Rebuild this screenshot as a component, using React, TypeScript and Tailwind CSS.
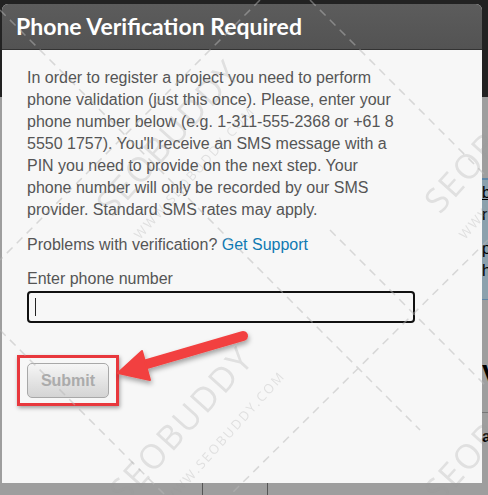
import React from "react";

export default function App() {
  return (
    <div className="relative w-[488px] h-[495px] overflow-hidden bg-[#9e9e9e]" style={{ fontFamily: '"Liberation Sans", Arial, sans-serif' }}>
      {/* page behind the modal */}
      <div className="flex flex-col w-full h-full">
        <div className="h-[97px] bg-[#222222] shrink-0" />
        <div className="flex-1 flex justify-end">
          <div className="w-[6px] flex flex-col">
            <div className="h-[81px]" />
            <div className="h-[122px] bg-[#8ca1ad] border-t-2 border-b border-[#5f86a6] text-[16px] leading-[22px] text-black pt-[2px]">
              <div className="underline">b</div>
              <div>r</div>
              <div className="mt-[12px]">p</div>
              <div>h</div>
            </div>
            <div className="h-[60px]" />
            <div className="text-[28px] font-bold leading-[30px] text-black">V</div>
            <div className="mt-[22px] border-t border-[#777]" />
            <div className="mt-[12px] text-[16px] font-bold text-black">a</div>
          </div>
        </div>
      </div>
      {/* bottom table lines */}
      <div className="absolute left-[202px] top-[483px] w-px h-[12px] bg-[#555]" />
      <div className="absolute left-[267px] top-[483px] w-px h-[12px] bg-[#555]" />

      {/* modal */}
      <div className="absolute left-[2px] top-[4px] w-[480px] h-[479px] flex flex-col bg-[#f7f7f7] rounded-t-[6px] overflow-hidden">
        <div className="h-[46px] shrink-0 bg-gradient-to-b from-[#5c5c5c] to-[#535353] border-b border-[#333] flex items-center pl-[14px]">
          <h1 className="text-white text-[23px] font-bold" style={{ fontFamily: 'Lato, "Open Sans", sans-serif' }}>
            Phone Verification Required
          </h1>
        </div>
        <div className="pl-[25px] pt-[17px] text-[16px] leading-[22px] text-[#555]">
          <p className="w-[372px]">
            In order to register a project you need to perform phone validation (just this once). Please, enter your phone number below (e.g. 1-311-555-2368 or +61 8 5550 1757). You'll receive an SMS message with a PIN you need to provide on the next step. Your phone number will only be recorded by our SMS provider. Standard SMS rates may apply.
          </p>
          <p className="mt-[13px]">
            Problems with verification? <span className="text-[#0f7ab3]">Get Support</span>
          </p>
          <div className="mt-[12px]">Enter phone number</div>
          <div className="mt-[1px] h-[32px] w-[388px] border-2 border-[#111] rounded-[4px] bg-[#f7f7f7] flex items-center pl-[6px]">
            <div className="w-px h-[18px] bg-[#222]" />
          </div>
          <button className="mt-[40px] w-[82px] h-[35px] rounded-[5px] border border-[#a8a8a8] bg-gradient-to-b from-[#f6f6f6] to-[#d4d4d4] text-[#ababab] font-bold text-[16px]">
            Submit
          </button>
        </div>
      </div>

      {/* annotation: red box */}
      <div className="absolute left-[17px] top-[355px] w-[102px] h-[51px] border-[3px] border-[#e8383d] shadow-[1px_2px_4px_rgba(0,0,0,0.35)]" />

      {/* watermark + arrow overlay */}
      <svg className="absolute inset-0 pointer-events-none" width="488" height="495" viewBox="0 0 488 495">
        <defs>
          <filter id="sh" x="-20%" y="-40%" width="140%" height="180%">
            <feDropShadow dx="1" dy="3" stdDeviation="2.5" floodColor="#000" floodOpacity="0.35" />
          </filter>
        </defs>
        <g stroke="#b8b8b8" strokeWidth="1.5" strokeDasharray="8 6" opacity="0.5" fill="none">
          <line x1="0" y1="10" x2="420" y2="430" />
          <line x1="260" y1="0" x2="0" y2="260" />
          <line x1="310" y1="0" x2="488" y2="178" />
          <line x1="488" y1="240" x2="230" y2="495" />
          <line x1="0" y1="330" x2="165" y2="495" />
          <line x1="330" y1="230" x2="490" y2="390" />
        </g>
        <g fill="#9a9a9a" opacity="0.25" style={{ fontFamily: '"Open Sans", sans-serif' }}>
          <text x="0" y="0" fontSize="34" transform="translate(112 218) rotate(-48)" letterSpacing="2">SEOBUDDY</text>
          <text x="0" y="0" fontSize="13" transform="translate(140 240) rotate(-48)" letterSpacing="2">WWW.SEOBUDDY.COM</text>
          <text x="0" y="0" fontSize="34" transform="translate(125 505) rotate(-48)" letterSpacing="2">SEOBUDDY</text>
          <text x="0" y="0" fontSize="13" transform="translate(170 505) rotate(-48)" letterSpacing="2">WWW.SEOBUDDY.COM</text>
          <text x="0" y="0" fontSize="34" transform="translate(440 215) rotate(-48)" letterSpacing="2">SEOBUDDY</text>
          <text x="0" y="0" fontSize="13" transform="translate(465 240) rotate(-48)" letterSpacing="2">WWW.SEOBUDDY.COM</text>
          <text x="0" y="0" fontSize="34" transform="translate(440 505) rotate(-48)" letterSpacing="2">SEOBUDDY</text>
        </g>
        <g filter="url(#sh)">
          <line x1="243" y1="336" x2="140" y2="366" stroke="#f2403f" strokeWidth="10" strokeLinecap="round" />
          <polygon points="118,373 142,351 150,380" fill="#f2403f" stroke="#f2403f" strokeWidth="2" strokeLinejoin="round" />
        </g>
      </svg>
    </div>
  );
}
